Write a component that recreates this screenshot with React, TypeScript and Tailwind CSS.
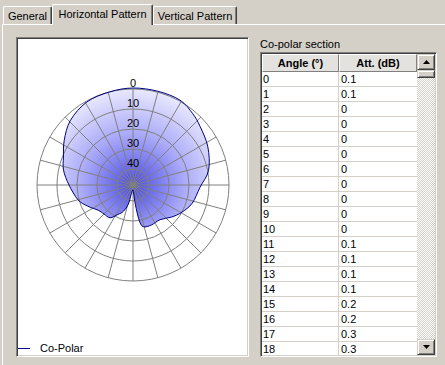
import React from 'react';

const ROWS: [string, string][] = [
  ['0', '0.1'], ['1', '0.1'], ['2', '0'], ['3', '0'], ['4', '0'], ['5', '0'], ['6', '0'],
  ['7', '0'], ['8', '0'], ['9', '0'], ['10', '0'], ['11', '0.1'], ['12', '0.1'], ['13', '0.1'],
  ['14', '0.1'], ['15', '0.2'], ['16', '0.2'], ['17', '0.3'], ['18', '0.3'],
];

// polar plot geometry (svg space)
const CX = 115;
const CY = 146;
const RINGS = [96, 76, 56, 36, 16];
const LABELS = ['0', '10', '20', '30', '40'];

// radius in px for an angle measured clockwise from the top
const PATTERN: [number, number][] = [
  [0, 97], [15, 97], [29, 97], [40, 93], [49, 89], [63, 84], [79, 77], [92, 67],
  [107, 62], [119, 56], [130, 50], [142, 44], [155, 44], [166, 43], [170, 36], [173, 20],
  [176, 8], [180, 5], [186, 6], [191, 10], [194, 20], [200, 28], [207, 33], [215, 40],
  [225, 41], [234, 43], [245, 50], [255, 57], [270, 64], [282, 71], [292, 75], [303, 82],
  [316, 90], [331, 95], [346, 96],
];

const toXY = (deg: number, r: number): [number, number] => {
  const a = (deg * Math.PI) / 180;
  return [CX + r * Math.sin(a), CY - r * Math.cos(a)];
};

const smoothPath = (pts: [number, number][]) => {
  const n = pts.length;
  const f = (v: number) => v.toFixed(2);
  let d = `M${f(pts[0][0])},${f(pts[0][1])}`;
  for (let i = 0; i < n; i++) {
    const p0 = pts[(i - 1 + n) % n];
    const p1 = pts[i];
    const p2 = pts[(i + 1) % n];
    const p3 = pts[(i + 2) % n];
    const c1x = p1[0] + (p2[0] - p0[0]) / 6;
    const c1y = p1[1] + (p2[1] - p0[1]) / 6;
    const c2x = p2[0] - (p3[0] - p1[0]) / 6;
    const c2y = p2[1] - (p3[1] - p1[1]) / 6;
    d += ` C${f(c1x)},${f(c1y)} ${f(c2x)},${f(c2y)} ${f(p2[0])},${f(p2[1])}`;
  }
  return d + 'Z';
};

const patternPath = smoothPath(PATTERN.map(([deg, r]) => toXY(deg, r)));

const PolarChart = () => (
  <svg width="229" height="303" viewBox="0 0 229 303">
    <defs>
      <radialGradient id="copolar" cx={CX} cy={CY} r="100" gradientUnits="userSpaceOnUse">
        <stop offset="0" stopColor="#4a4ae6" />
        <stop offset="0.5" stopColor="#a8a8f8" />
        <stop offset="1" stopColor="#eeeeff" />
      </radialGradient>
    </defs>
    <path d={patternPath} fill="url(#copolar)" />
    {Array.from({ length: 24 }).map((_, k) => {
      const [x, y] = toXY(k * 15, 96);
      return <line key={k} x1={CX} y1={CY} x2={x} y2={y} stroke="#808080" strokeWidth="1" />;
    })}
    {RINGS.map((r) => (
      <circle key={r} cx={CX} cy={CY} r={r} fill="none" stroke="#808080" strokeWidth="1" />
    ))}
    <path d={patternPath} fill="none" stroke="#000080" strokeWidth="1" />
    {RINGS.map((r, i) => (
      <text
        key={r}
        x={CX}
        y={CY - r - 2}
        textAnchor="middle"
        fontSize="11"
        fontFamily="'Liberation Sans', Arial, sans-serif"
        fill="#000"
      >
        {LABELS[i]}
      </text>
    ))}
  </svg>
);

const raised =
  'border border-t-[#d4d0c8] border-l-[#d4d0c8] border-r-[#404040] border-b-[#404040] shadow-[inset_1px_1px_0_#fff,inset_-1px_-1px_0_#808080] bg-[#d4d0c8]';

const headerCell =
  'border border-t-white border-l-white border-r-[#808080] border-b-[#808080] bg-[#e4e2de]';

const Arrow = ({ down }: { down?: boolean }) => (
  <svg width="7" height="4" viewBox="0 0 7 4">
    <polygon points={down ? '0,0 7,0 3.5,4' : '0,4 7,4 3.5,0'} fill="#000" />
  </svg>
);

const App = () => {
  return (
    <div className="w-[445px] h-[365px] overflow-hidden bg-[#d4d0c8] text-black text-[11px] font-['Liberation_Sans',Arial,sans-serif]">
      {/* tab strip */}
      <div className="relative z-10 flex items-end h-[24px] pl-[3px]">
        <div className="w-[49px] h-[18px] pt-[3px] leading-[13px] text-center border-l border-t border-white border-r border-r-[#404040] shadow-[inset_-1px_0_0_#808080] rounded-t-[2px]">
          General
        </div>
        <div className="w-[101px] h-[21px] -mb-px pt-[3px] leading-[13px] text-center bg-[#d4d0c8] border-l border-t border-white border-r border-r-[#404040] shadow-[inset_-1px_0_0_#808080] rounded-t-[2px]">
          Horizontal Pattern
        </div>
        <div className="w-[84px] h-[18px] pt-[3px] leading-[13px] text-center border-l border-t border-white border-r border-r-[#404040] shadow-[inset_-1px_0_0_#808080] rounded-t-[2px]">
          Vertical Pattern
        </div>
      </div>

      {/* tab panel */}
      <div className="ml-[2px] h-[400px] border-t border-l border-white flex gap-[11px] pl-[13px] pt-[12px]">
        {/* plot */}
        <div className="w-[233px] h-[320px] bg-white flex flex-col border border-t-[#808080] border-l-[#808080] border-r-white border-b-white shadow-[inset_1px_1px_0_#404040,inset_-1px_-1px_0_#d4d0c8] p-px">
          <PolarChart />
          <div className="mt-auto h-[13px] flex items-center">
            <div className="w-[12px] h-px bg-[#000080]" />
            <span className="ml-[10px] leading-[13px]">Co-Polar</span>
          </div>
        </div>

        {/* table */}
        <div className="w-[177px] flex flex-col">
          <div className="leading-[15px]">Co-polar section</div>
          <div className="h-[305px] bg-white flex border border-t-[#808080] border-l-[#808080] border-r-white border-b-white shadow-[inset_1px_1px_0_#404040,inset_-1px_-1px_0_#d4d0c8] p-px">
            <div className="w-[155px] flex flex-col overflow-hidden">
              <div className="flex h-[18px] shrink-0 font-bold">
                <div className={`w-[77px] flex items-center justify-center ${headerCell}`}>Angle (°)</div>
                <div className={`w-[78px] flex items-center justify-center ${headerCell}`}>Att. (dB)</div>
              </div>
              {ROWS.map(([angle, att]) => (
                <div key={angle} className="flex h-[15px] shrink-0 border-b border-[#d4d0c8] leading-[14px]">
                  <div className="w-[77px] pl-px border-r border-[#d4d0c8]">{angle}</div>
                  <div className="w-[78px] pl-[2px]">{att}</div>
                </div>
              ))}
            </div>
            <div className="w-[18px] flex flex-col">
              <div className={`h-[16px] shrink-0 flex items-center justify-center ${raised}`}>
                <Arrow />
              </div>
              <div className={`h-[8px] shrink-0 ${raised}`} />
              <div className="flex-1 bg-[image:repeating-conic-gradient(#ffffff_0%_25%,#d4d0c8_0%_50%)] bg-[length:2px_2px]" />
              <div className={`h-[16px] shrink-0 flex items-center justify-center ${raised}`}>
                <Arrow down />
              </div>
            </div>
          </div>
        </div>
      </div>
    </div>
  );
};

export default App;
